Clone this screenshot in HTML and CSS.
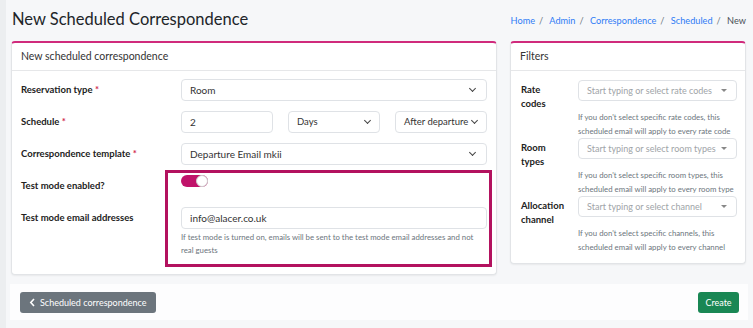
FILE: index.html
```html
<!DOCTYPE html>
<html lang="en">
<head>
    <meta charset="UTF-8">
    <meta name="viewport" content="width=device-width, initial-scale=1.0">
    <title>New Scheduled Correspondence</title>
    <link rel="stylesheet" href="styles.css">
</head>
<body>
<div class="edge"></div>
<div class="page">
    <div class="page-header">
        <h1>New Scheduled Correspondence</h1>
        <nav class="crumbs">
            <a href="#">Home</a><span class="sep">/</span>
            <a href="#">Admin</a><span class="sep">/</span>
            <a href="#">Correspondence</a><span class="sep">/</span>
            <a href="#">Scheduled</a><span class="sep">/</span>
            <span class="current">New</span>
        </nav>
    </div>

    <div class="columns">
        <!-- main form -->
        <div class="card card-main">
            <div class="card-header">New scheduled correspondence</div>
            <div class="card-body">
                <div class="form-row">
                    <label>Reservation type <span class="req">*</span></label>
                    <div class="field">
                        <div class="select">Room<span class="chev"></span></div>
                    </div>
                </div>
                <div class="form-row">
                    <label>Schedule <span class="req">*</span></label>
                    <div class="field schedule">
                        <div class="input">2</div>
                        <div class="select">Days<span class="chev"></span></div>
                        <div class="select">After departure<span class="chev"></span></div>
                    </div>
                </div>
                <div class="form-row">
                    <label>Correspondence template <span class="req">*</span></label>
                    <div class="field">
                        <div class="select">Departure Email mkii<span class="chev"></span></div>
                    </div>
                </div>
                <div class="form-row">
                    <label>Test mode enabled?</label>
                    <div class="field">
                        <div class="switch"><span class="knob"></span></div>
                    </div>
                </div>
                <div class="form-row">
                    <label>Test mode email addresses</label>
                    <div class="field">
                        <div class="input">info@alacer.co.uk</div>
                        <p class="help">If test mode is turned on, emails will be sent to the test mode email addresses and not real guests</p>
                    </div>
                </div>
            </div>
            <div class="highlight"></div>
        </div>

        <!-- filters -->
        <div class="card card-filters">
            <div class="card-header">Filters</div>
            <div class="card-body">
                <div class="filter-row">
                    <label>Rate codes</label>
                    <div class="field">
                        <div class="select placeholder">Start typing or select rate codes<span class="caret"></span></div>
                        <p class="help">If you don't select specific rate codes, this scheduled email will apply to every rate code</p>
                    </div>
                </div>
                <div class="filter-row">
                    <label>Room types</label>
                    <div class="field">
                        <div class="select placeholder">Start typing or select room types<span class="caret"></span></div>
                        <p class="help">If you don't select specific room types, this scheduled email will apply to every room type</p>
                    </div>
                </div>
                <div class="filter-row">
                    <label>Allocation channel</label>
                    <div class="field">
                        <div class="select placeholder">Start typing or select channel<span class="caret"></span></div>
                        <p class="help">If you don't select specific channels, this scheduled email will apply to every channel</p>
                    </div>
                </div>
            </div>
        </div>
    </div>

    <div class="actions">
        <button class="btn btn-back">
            <svg width="7" height="9" viewBox="0 0 7 9"><path d="M5 1 L1.8 4.5 L5 8" fill="none" stroke="#fff" stroke-width="1.6"/></svg>
            Scheduled correspondence
        </button>
        <button class="btn btn-create">Create</button>
    </div>
</div>
</body>
</html>
```

FILE: styles.css
```css
* {
    box-sizing: border-box;
}

body {
    margin: 0;
    font-family: Lato, "Open Sans", sans-serif;
    background-color: #f6f7f9;
    color: #212529;
    display: flex;
    min-height: 328px;
}

.edge {
    width: 6px;
    background-color: #eceef0;
    flex-shrink: 0;
}

.page {
    flex: 1;
    padding: 0 7px 0 5px;
}

.page-header {
    display: flex;
    justify-content: space-between;
    align-items: center;
    height: 38px;
    padding-left: 1px;
}

h1 {
    margin: 0;
    font-size: 16.5px;
    font-weight: 400;
    color: #212529;
}

.crumbs {
    font-size: 9.2px;
    color: #6c757d;
    padding-top: 3px;
}

.crumbs a {
    color: #2f7cf6;
    text-decoration: none;
}

.crumbs .sep {
    margin: 0 4px;
    color: #6c757d;
}

.crumbs .current {
    color: #495057;
}

.columns {
    display: flex;
    align-items: flex-start;
    gap: 13px;
    margin-top: 3px;
}

.card {
    background-color: #fff;
    border: 1px solid #e2e4e7;
    border-top: 2px solid #d02a7c;
    border-radius: 4px;
    box-shadow: 0 1px 2px rgba(0, 0, 0, 0.06);
}

.card-main {
    width: 486px;
    position: relative;
}

.card-filters {
    width: 236px;
}

.card-header {
    height: 28px;
    line-height: 27px;
    padding: 0 9px;
    font-size: 10.5px;
    color: #333;
    border-bottom: 1px solid #e6e7e9;
}

.card-main .card-body {
    padding: 8px 9px 17px 9px;
}

.form-row {
    display: flex;
    align-items: flex-start;
    margin-bottom: 10px;
}

.form-row:last-child {
    margin-bottom: 0;
}

.form-row label {
    width: 160px;
    height: 22px;
    flex-shrink: 0;
    font-size: 9.5px;
    font-weight: 700;
    line-height: 22px;
    color: #222;
}

.req {
    color: #d02a4e;
}

.field {
    flex: 1;
    min-width: 0;
}

.select, .input {
    height: 22px;
    line-height: 20px;
    border: 1px solid #dfe2e6;
    border-radius: 4px;
    padding: 0 8px;
    font-size: 10px;
    color: #333;
    position: relative;
    background: #fff;
    white-space: nowrap;
    overflow: hidden;
}

.chev {
    position: absolute;
    right: 11px;
    top: 6px;
    width: 5px;
    height: 5px;
    border-right: 1.2px solid #444;
    border-bottom: 1.2px solid #444;
    transform: rotate(45deg);
}

.schedule {
    display: flex;
    gap: 15px;
}

.schedule .input,
.schedule .select {
    flex: 1 1 0;
    min-width: 0;
    padding: 0 6px 0 8px;
}

.schedule .select {
    font-size: 9.5px;
}

.schedule .chev {
    right: 9px;
}

.switch {
    width: 27px;
    height: 12px;
    border-radius: 6px;
    background-color: #c0136a;
    position: relative;
}

.knob {
    position: absolute;
    right: 0;
    top: 0;
    width: 12px;
    height: 12px;
    border-radius: 50%;
    background: #fff;
    border: 1px solid #d0d0d0;
}

.help {
    margin: 2px 0 0 0;
    font-size: 7.8px;
    line-height: 13px;
    color: #6c757d;
}

.highlight {
    position: absolute;
    left: 153px;
    top: 127px;
    width: 327px;
    height: 97px;
    border: 3px solid #b3125f;
    pointer-events: none;
}

.card-filters .card-body {
    padding: 9px 8px 9px 10px;
}

.filter-row {
    display: flex;
    align-items: flex-start;
}

.filter-row label {
    width: 57px;
    padding-right: 12px;
    flex-shrink: 0;
    font-size: 9.5px;
    font-weight: 700;
    line-height: 14px;
    padding-top: 3px;
    color: #222;
}

.select.placeholder {
    height: 21px;
    line-height: 19px;
    color: #a0a4a8;
    font-size: 9px;
    padding-right: 20px;
    text-overflow: ellipsis;
}

.caret {
    position: absolute;
    right: 9px;
    top: 8px;
    border-left: 3px solid transparent;
    border-right: 3px solid transparent;
    border-top: 3px solid #888;
}

.filter-row .help {
    line-height: 14px;
    margin-top: 9px;
}

.actions {
    display: flex;
    justify-content: space-between;
    align-items: center;
    background-color: #fdfdfe;
    margin: 9px -2px 0 -1px;
    padding: 0 9px 0 10px;
    height: 36px;
}

.btn {
    border: none;
    border-radius: 3px;
    color: #fff;
    font-family: Lato, sans-serif;
    font-size: 9px;
    height: 21px;
    padding: 0 8px;
    cursor: pointer;
    display: flex;
    align-items: center;
    gap: 4px;
    white-space: nowrap;
}

.btn-back {
    background-color: #6c757d;
    width: 136px;
    padding-left: 9px;
}

.btn-create {
    background-color: #198754;
    width: 41px;
    justify-content: center;
}
```
